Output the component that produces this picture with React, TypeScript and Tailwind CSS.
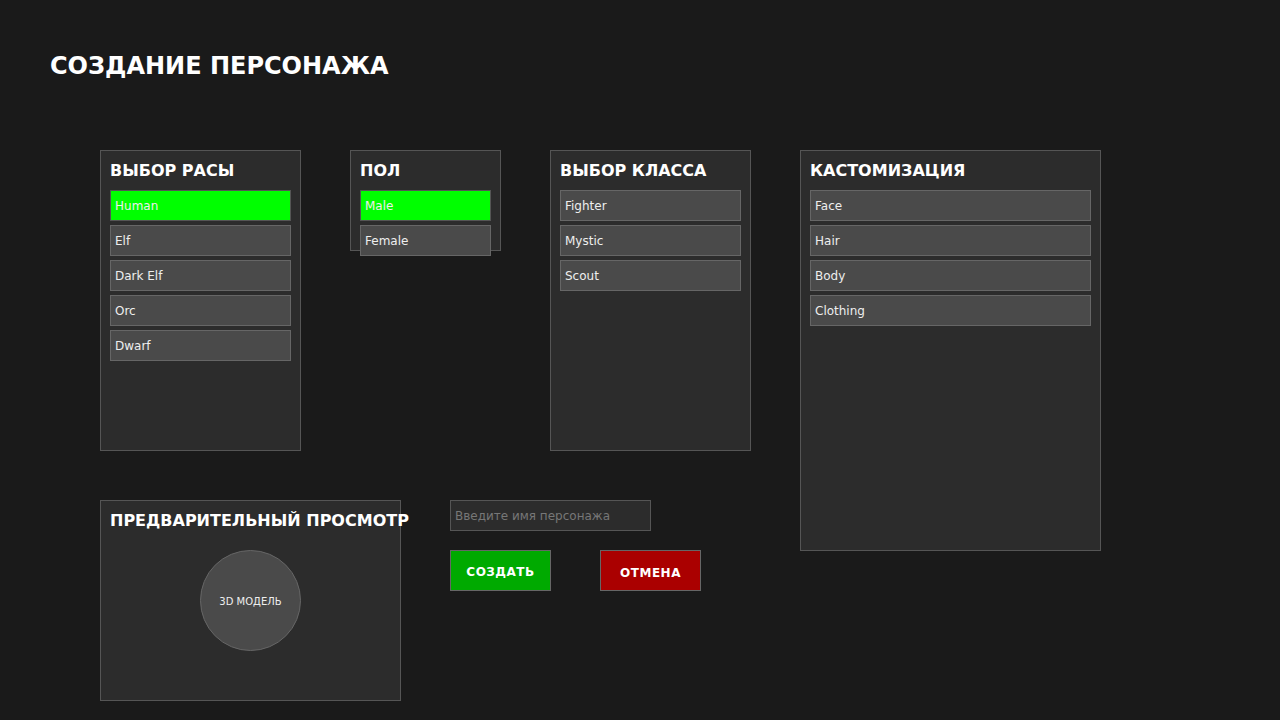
import React from 'react';

const font = "font-['DejaVu_Sans',_'Noto_Sans',_sans-serif]";

interface OptionListProps {
    items: string[];
    selected?: string;
}

const OptionList: React.FC<OptionListProps> = ({ items, selected }) => (
    <div className="flex flex-col gap-[4px]">
        {items.map((item) => (
            <div
                key={item}
                className={`h-[31px] flex items-center pl-[4px] pt-[1px] border text-[12px] text-[#eeeeee] ${
                    item === selected ? 'bg-[#00ff00] border-[#555555]' : 'bg-[#4a4a4a] border-[#666666]'
                }`}
            >
                {item}
            </div>
        ))}
    </div>
);

interface PanelProps {
    title: string;
    className: string;
    children?: React.ReactNode;
}

const Panel: React.FC<PanelProps> = ({ title, className, children }) => (
    <div className={`bg-[#2c2c2c] border border-[#555555] px-[9px] pt-[10px] shrink-0 ${className}`}>
        <h2 className="text-[16px] leading-[20px] font-bold text-white mb-[9px] whitespace-nowrap">{title}</h2>
        {children}
    </div>
);

const App: React.FC = () => {
    return (
        <div className={`w-full h-[720px] overflow-hidden bg-[#1a1a1a] px-[50px] pt-[52px] ${font}`}>
            <h1 className="text-[24px] leading-[28px] font-bold text-white">СОЗДАНИЕ ПЕРСОНАЖА</h1>

            <div className="ml-[50px] mt-[70px] flex items-start gap-[49px]">
                <div className="w-[651px] flex flex-col gap-[49px] shrink-0">
                    <div className="flex items-start gap-[49px] h-[301px]">
                        <Panel title="ВЫБОР РАСЫ" className="w-[201px] h-[301px]">
                            <OptionList items={['Human', 'Elf', 'Dark Elf', 'Orc', 'Dwarf']} selected="Human" />
                        </Panel>
                        <Panel title="ПОЛ" className="w-[151px] h-[101px]">
                            <OptionList items={['Male', 'Female']} selected="Male" />
                        </Panel>
                        <Panel title="ВЫБОР КЛАССА" className="w-[201px] h-[301px]">
                            <OptionList items={['Fighter', 'Mystic', 'Scout']} />
                        </Panel>
                    </div>

                    <div className="flex items-start gap-[49px]">
                        <div className="w-[301px] h-[201px] bg-[#2c2c2c] border border-[#555555] px-[9px] pt-[9px] pb-[10px] grid grid-cols-1 grid-rows-1 shrink-0">
                            <h2 className="[grid-area:1/1] self-start mt-[1px] min-w-0 text-[16px] leading-[20px] font-bold text-white whitespace-nowrap">
                                ПРЕДВАРИТЕЛЬНЫЙ ПРОСМОТР
                            </h2>
                            <div className="[grid-area:1/1] place-self-center w-[101px] h-[101px] rounded-full bg-[#4a4a4a] border border-[#666666] flex items-center justify-center pt-[2px] text-[10px] text-[#eeeeee]">
                                3D МОДЕЛЬ
                            </div>
                        </div>

                        <div className="flex flex-col gap-[19px]">
                            <input
                                type="text"
                                placeholder="Введите имя персонажа"
                                className="w-[201px] h-[31px] bg-[#2c2c2c] border border-[#555555] pl-[4px] pt-[1px] text-[12px] text-white placeholder:text-[#777777] outline-none"
                            />
                            <div className="flex gap-[49px]">
                                <button className="w-[101px] h-[41px] bg-[#00aa00] border border-[#666666] text-white text-[12px] font-bold tracking-[0.5px] pt-[3px]">
                                    СОЗДАТЬ
                                </button>
                                <button className="w-[101px] h-[41px] bg-[#aa0000] border border-[#666666] text-white text-[12px] font-bold tracking-[0.5px] pt-[4px]">
                                    ОТМЕНА
                                </button>
                            </div>
                        </div>
                    </div>
                </div>

                <Panel title="КАСТОМИЗАЦИЯ" className="w-[301px] h-[401px]">
                    <OptionList items={['Face', 'Hair', 'Body', 'Clothing']} />
                </Panel>
            </div>
        </div>
    );
};

export default App;
